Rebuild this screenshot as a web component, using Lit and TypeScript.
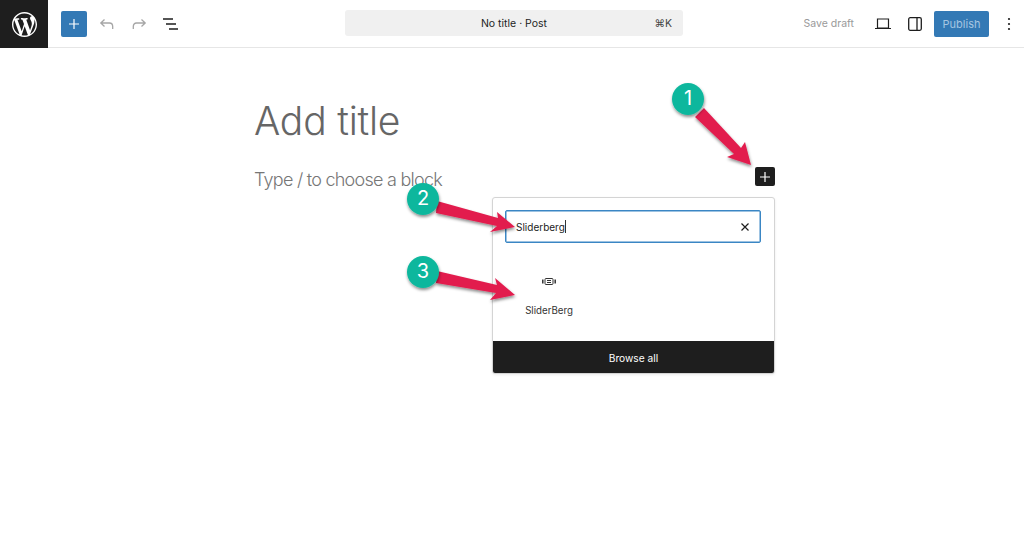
import { LitElement, html, css, svg } from "lit";
import { customElement } from "lit/decorators.js";

const WP = "M20 10c0-5.51-4.49-10-10-10C4.48 0 0 4.49 0 10c0 5.52 4.48 10 10 10 5.51 0 10-4.48 10-10zM7.78 15.37L4.37 6.22c.55-.02 1.17-.08 1.17-.08.5-.06.44-1.13-.06-1.11 0 0-1.45.11-2.37.11-.18 0-.37 0-.58-.01C4.12 2.69 6.87 1.11 10 1.11c2.33 0 4.45.87 6.05 2.34-.68-.11-1.65.39-1.65 1.58 0 .74.45 1.36.9 2.1.35.61.55 1.36.55 2.46 0 1.49-1.4 5-1.4 5l-3.03-8.37c.54-.02.82-.17.82-.17.5-.05.44-1.25-.06-1.22 0 0-1.44.12-2.38.12-.87 0-2.33-.12-2.33-.12-.5-.03-.56 1.2-.06 1.22l.92.08 1.26 3.41zM17.41 10c.24-.64.74-1.87.43-4.25.7 1.29 1.05 2.71 1.05 4.25 0 3.29-1.73 6.24-4.4 7.78.97-2.59 1.94-5.2 2.92-7.78zM6.1 18.09C3.12 16.65 1.11 13.53 1.11 10c0-1.3.23-2.48.72-3.59C3.25 10.3 4.67 14.2 6.1 18.09zm4.03-6.63l2.58 6.98c-.86.29-1.76.45-2.71.45-.79 0-1.57-.11-2.29-.33.81-2.38 1.62-4.74 2.42-7.1z";

const plus = html`<svg width="14" height="14" viewBox="0 0 14 14"><path d="M7 2v10M2 7h10" stroke="currentColor" stroke-width="1.200" fill="none"/></svg>`;

const arrows = [
  "695,117 704,108 741,148 745,142 751,165 727,157 734,154",
  "437,201 498,218 497,212 515,227 490,232 497,226 436,213",
  "437,271 497,285 495,278 515,295 490,300 496,293 436,283",
];
const badges = [
  { x: 688, y: 99, n: "1" },
  { x: 423, y: 199, n: "2" },
  { x: 423, y: 272, n: "3" },
];

@customElement("app-root")
export class AppRoot extends LitElement {
  static styles = css`
    :host { display: block; position: relative; width: 1024px; height: 544px; overflow: hidden; background: #fff; font-family: Inter, "Liberation Sans", sans-serif; color: #1e1e1e; }
    .bar { height: 47px; border-bottom: 1px solid #e6e6e6; display: grid; grid-template-columns: 345px 338px 1fr; align-items: center; }
    .left, .right { display: flex; align-items: center; height: 47px; }
    .logo { width: 48px; height: 48px; background: #1e1e1e; display: flex; align-items: center; justify-content: center; color: #fff; align-self: flex-start; }
    .add { width: 26px; height: 26px; margin-left: 13px; background: #3379b5; color: #fff; border-radius: 2px; display: flex; align-items: center; justify-content: center; }
    .ico { display: flex; align-items: center; justify-content: center; width: 32px; height: 26px; }
    .tools { display: flex; margin-left: 4px; }
    .muted { color: #a6a6a6; }
    .dark { color: #1e1e1e; }
    .cmd { height: 26px; background: #f0f0f0; border-radius: 3px; display: grid; grid-template-columns: 1fr auto 1fr; align-items: center; font-size: 10.5px; margin-top: -1px; }
    .kbd { justify-self: end; padding-right: 11px; color: #444; }
    .right { justify-content: flex-end; margin-right: -1px; }
    .save { font-size: 10.5px; color: #9a9a9a; margin-right: 13px; }
    .pub { width: 55px; height: 26px; background: #3379b5; color: #a5c6e2; border-radius: 2px; font-size: 11px; display: flex; align-items: center; justify-content: center; margin-left: 3px; }
    .dots { margin: 0 0 0 4px; }
    .editor { padding: 48px 0 0 254px; color: #6b6b6b; }
    .title { font-size: 39px; line-height: 50px; font-weight: 350; letter-spacing: -0.2px; color: #666; }
    .hint { font-size: 18px; line-height: 24px; margin-top: 22px; font-weight: 300; letter-spacing: -0.75px; color: #767676; }
    .inline-add { position: absolute; left: 755px; top: 167px; width: 20px; height: 19px; background: #1e1e1e; color: #fff; border-radius: 2px; display: flex; align-items: center; justify-content: center; }
    .pop { position: absolute; left: 492px; top: 197px; width: 281px; height: 175px; border: 1px solid #d4d4d4; border-radius: 3px; background: #fff; display: flex; flex-direction: column; overflow: hidden; box-shadow: 0 1px 3px rgba(0,0,0,.08); }
    .search { margin: 12px 13px 0 12px; height: 31px; border: 1px solid #3a86c4; box-shadow: inset 0 0 0 .5px #3a86c4; border-radius: 2px; display: flex; align-items: center; justify-content: space-between; padding: 0 10px 0 10px; font-size: 10px; color: #222; }
    .typed { display: flex; align-items: center; }
    .caret { width: 1px; height: 13px; background: #333; }
    .results { flex: 1; }
    .item { width: 112px; display: flex; flex-direction: column; align-items: center; margin-top: 35px; font-size: 9.700px; color: #333; gap: 20px; }
    .browse { height: 31px; padding-top: 1px; background: #1e1e1e; color: #fff; font-size: 10.200px; display: flex; align-items: center; justify-content: center; }
    .marks { position: absolute; left: 0; top: 0; pointer-events: none; }
    .marks text { font: 400 20px Inter, "Liberation Sans", sans-serif; fill: #fff; text-anchor: middle; }
  `;

  render() {
    return html`
      <div class="bar">
        <div class="left">
          <div class="logo"><svg width="25" height="25" viewBox="0 0 20 20"><path d=${WP} fill="currentColor"/></svg></div>
          <div class="add">${plus}</div>
          <div class="tools">
            <div class="ico muted"><svg width="16" height="14" viewBox="0 0 16 14" fill="none" stroke="currentColor" stroke-width="1.300"><path d="M5.500 2.500L1.800 6l3.700 3.500M2 6h8.500c2 0 3.200 1.500 3.200 3.600V12"/></svg></div>
            <div class="ico muted"><svg width="16" height="14" viewBox="0 0 16 14" fill="none" stroke="currentColor" stroke-width="1.300"><path d="M10.500 2.500L14.200 6l-3.700 3.500M14 6H5.500C3.500 6 2.300 7.500 2.300 9.600V12"/></svg></div>
            <div class="ico dark"><svg width="16" height="12" viewBox="0 0 16 12" fill="none" stroke="currentColor" stroke-width="1.300"><path d="M0 1h10M3 6h10M6 11h9"/></svg></div>
          </div>
        </div>
        <div class="cmd"><span></span><span>No title · Post</span><span class="kbd">⌘K</span></div>
        <div class="right">
          <span class="save">Save draft</span>
          <div class="ico dark"><svg width="16" height="12" viewBox="0 0 16 12" fill="none" stroke="currentColor" stroke-width="1.200"><path d="M2.500 1h11v9h-11zM0 10.500h16"/></svg></div>
          <div class="ico dark"><svg width="14" height="14" viewBox="0 0 14 14" fill="none" stroke="currentColor" stroke-width="1.300"><rect x=".7" y=".7" width="12.600" height="12.600" rx="1.500"/><path d="M9 .7v12.600"/></svg></div>
          <div class="pub">Publish</div>
          <div class="ico dots dark"><svg width="4" height="14" viewBox="0 0 4 14" fill="currentColor"><circle cx="2" cy="2" r="1.100"/><circle cx="2" cy="7" r="1.100"/><circle cx="2" cy="12" r="1.100"/></svg></div>
        </div>
      </div>
      <div class="editor">
        <div class="title">Add title</div>
        <div class="hint">Type / to choose a block</div>
      </div>
      <div class="inline-add">${plus}</div>
      <div class="pop">
        <div class="search">
          <span class="typed">Sliderberg<span class="caret"></span></span>
          <svg width="10" height="10" viewBox="0 0 10 10" fill="none" stroke="#1e1e1e" stroke-width="1.200"><path d="M1.500 1.500l7 7M8.500 1.500l-7 7"/></svg>
        </div>
        <div class="results">
          <div class="item">
            <svg width="14" height="7" viewBox="0 0 14 7" fill="none" stroke="#333" stroke-width="1"><rect x="3" y=".5" width="8" height="6" rx="1"/><path d="M5 2.500h4M5 4.500h4" /><path d="M.8 1.500v4M13.200 1.500v4" stroke-width="1.500"/></svg>
            <span>SliderBerg</span>
          </div>
        </div>
        <div class="browse">Browse all</div>
      </div>
      <svg class="marks" width="1024" height="544" viewBox="0 0 1024 544">
        <defs><filter id="s" x="-30%" y="-30%" width="170%" height="170%"><feDropShadow dx="0.500" dy="2" stdDeviation="1.500" flood-color="#000" flood-opacity=".45"/></filter></defs>
        ${arrows.map((p) => svg`<polygon points=${p} fill="#e21d4e" filter="url(#s)"/>`)}
        ${badges.map((b) => svg`<circle cx=${b.x} cy=${b.y} r="16" fill="#0cb79d" filter="url(#s)"/><text x=${b.x} y=${b.y + 6}>${b.n}</text>`)}
      </svg>
    `;
  }
}
